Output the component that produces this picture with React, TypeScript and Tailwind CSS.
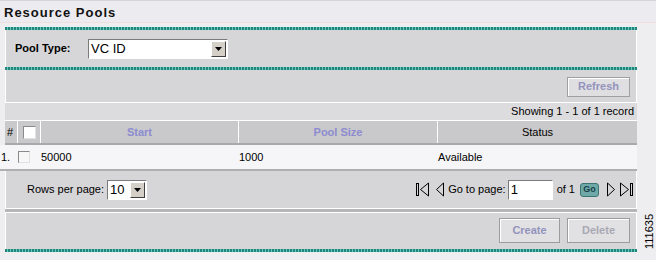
import React from 'react';

// 청록 점선 띠 (패널 구분선)
function TealBar() {
  return (
    <div className="h-[3px] w-full bg-[repeating-linear-gradient(90deg,#23847a_0px,#23847a_2px,#62cbc0_2px,#62cbc0_3px)]" />
  );
}

function Checkbox({ big }: { big?: boolean }) {
  return (
    <div
      className={
        big
          ? 'h-[13px] w-[13px] border border-[#8a8a8a] border-b-[#e2e2e2] border-r-[#e2e2e2] bg-white'
          : 'h-[12px] w-[12px] border border-[#8a8a8a] border-b-[#e0e0e0] border-r-[#e0e0e0] bg-[#f7f7f7]'
      }
    />
  );
}

function SelectBox({ value, wide }: { value: string; wide?: boolean }) {
  return (
    <div
      className={
        (wide ? 'w-[140px] ' : 'w-[40px] ') +
        'flex h-[20px] border border-[#7b7b7b] border-b-white border-r-white bg-white'
      }
    >
      <div className="flex flex-1 items-center pl-[2px] text-[13px] leading-none">{value}</div>
      <div className="m-[1px] flex w-[15px] items-center justify-center border border-white border-b-[#404040] border-r-[#404040] bg-[#d4d0c8]">
        <svg width="7" height="4" viewBox="0 0 7 4">
          <path d="M0 0h7L3.5 4z" fill="#000" />
        </svg>
      </div>
    </div>
  );
}

function Btn({ label, w, dim }: { label: string; w: string; dim?: boolean }) {
  return (
    <button
      className={
        w +
        ' h-[25px] border border-[#9c9c9c] bg-[#e1e0e2] text-[11px] font-bold shadow-[inset_1px_1px_0_#fff] ' +
        (dim ? 'text-[#a9a9b4]' : 'text-[#9393bd]')
      }
    >
      {label}
    </button>
  );
}

// 페이지 이동 화살표
function PageArrow({ kind }: { kind: 'first' | 'prev' | 'next' | 'last' }) {
  const wide = kind === 'first' || kind === 'last';
  return (
    <svg width={wide ? 14 : 10} height="15" viewBox={wide ? '0 0 14 15' : '0 0 10 15'}>
      {kind === 'first' && (
        <>
          <rect x="0.5" y="1.5" width="2" height="12" fill="none" stroke="#000" />
          <polygon points="12.5,1 4.5,7.5 12.5,14" fill="none" stroke="#000" />
        </>
      )}
      {kind === 'prev' && <polygon points="8.5,1 1.5,7.5 8.5,14" fill="none" stroke="#000" />}
      {kind === 'next' && <polygon points="1.5,1 8.5,7.5 1.5,14" fill="none" stroke="#000" />}
      {kind === 'last' && (
        <>
          <polygon points="1.5,1 9.5,7.5 1.5,14" fill="none" stroke="#000" />
          <rect x="11.5" y="1.5" width="2" height="12" fill="none" stroke="#000" />
        </>
      )}
    </svg>
  );
}

export default function App() {
  return (
    <div className="relative h-[260px] w-[656px] overflow-hidden bg-[#eeedf0] font-['Liberation_Sans',Arial,sans-serif] text-[11px] text-black">
      {/* 제목 */}
      <div className="h-[23px] border-t border-b border-t-[#d6d6d8] border-b-[#f1dfdf] bg-[#ecebef] pl-[4px] pt-[4px]">
        <h1 className="text-[13px] font-bold leading-[15px] tracking-[1px] text-[#111]">Resource Pools</h1>
      </div>

      <div className="ml-[5px] mt-[4px] w-[632px]">
        <TealBar />

        {/* 풀 종류 선택 */}
        <div className="flex h-[37px] items-center border-x border-white bg-[#d6d5d7] pl-[9px]">
          <span className="w-[73px] font-bold">Pool Type:</span>
          <SelectBox value="VC ID" wide />
        </div>

        <TealBar />

        {/* 툴바 */}
        <div className="flex h-[32px] items-center justify-end border-x border-white bg-[#d6d5d7] pr-[6px] pt-[1px]">
          <button className="h-[20px] w-[63px] border border-[#a0a0a0] bg-[#dfdee0] text-[11px] font-bold text-[#9393bd] shadow-[inset_1px_1px_0_#fff]">
            Refresh
          </button>
        </div>
        <div className="h-px bg-white" />

        <div className="flex h-[17px] items-center justify-end bg-[#dcdbdd] pr-[3px]">Showing 1 - 1 of 1 record</div>
        <div className="h-px bg-white" />

        {/* 표 머리 */}
        <div className="grid h-[24px] grid-cols-[12px_23px_198px_199px_1fr] border-b-2 border-[#a9a9ab] bg-[#c9c8ca]">
          <div className="flex items-center pl-[2px]">#</div>
          <div className="flex items-center border-l border-white pl-[5px]">
            <Checkbox big />
          </div>
          <div className="flex items-center justify-center border-l border-white font-bold text-[#8c8cd0]">Start</div>
          <div className="flex items-center justify-center border-l border-white font-bold text-[#8c8cd0]">Pool Size</div>
          <div className="flex items-center justify-center border-l border-white">Status</div>
        </div>

        {/* 데이터 행 */}
        <div className="-ml-[5px] grid h-[26px] grid-cols-[17px_23px_198px_199px_1fr] border-b-2 border-[#afafb1] bg-[#f6f6f8]">
          <div className="flex items-center pl-[1px]">1.</div>
          <div className="flex items-center pl-[1px]">
            <Checkbox />
          </div>
          <div className="flex items-center pl-[1px]">50000</div>
          <div className="flex items-center pl-[1px]">1000</div>
          <div className="flex items-center pl-[1px]">Available</div>
        </div>

        {/* 페이지 이동 */}
        <div className="flex h-[37px] items-center justify-between border-x border-white bg-[#d6d5d7] pl-[21px] pr-[3px]">
          <div className="flex items-center gap-[3px]">
            <span>Rows per page:</span>
            <SelectBox value="10" />
          </div>
          <div className="flex items-center">
            <PageArrow kind="first" />
            <div className="ml-[5px]">
              <PageArrow kind="prev" />
            </div>
            <span className="ml-[3px]">Go to page:</span>
            <div className="ml-[2px] flex h-[20px] w-[45px] items-center border border-[#7b7b7b] border-b-white border-r-white bg-white pl-[2px] text-[13px]">
              1
            </div>
            <span className="ml-[4px]">of 1</span>
            <div className="ml-[5px] flex h-[14px] w-[19px] items-center justify-center rounded-[3px] border border-[#3d7573] bg-[#6fa9a7] text-[9px] font-bold text-[#173f4a]">
              Go
            </div>
            <div className="ml-[7px]">
              <PageArrow kind="next" />
            </div>
            <div className="ml-[3px]">
              <PageArrow kind="last" />
            </div>
          </div>
        </div>

        <div className="h-px bg-white" />
        <div className="h-[3px] bg-[#b6b6b8]" />
        <div className="h-px bg-white" />

        {/* 생성/삭제 */}
        <div className="flex h-[36px] items-start justify-end gap-[7px] border-x border-white bg-[#d6d5d7] pr-[6px] pt-[5px]">
          <Btn label="Create" w="w-[61px]" />
          <Btn label="Delete" w="w-[63px]" dim />
        </div>

        <TealBar />
      </div>

      {/* 그림 번호 */}
      <div className="absolute left-[643px] top-[211px] flex h-[40px] w-[13px] items-center justify-center">
        <span className="-rotate-90 whitespace-nowrap text-[11px] leading-none">111635</span>
      </div>
    </div>
  );
}
